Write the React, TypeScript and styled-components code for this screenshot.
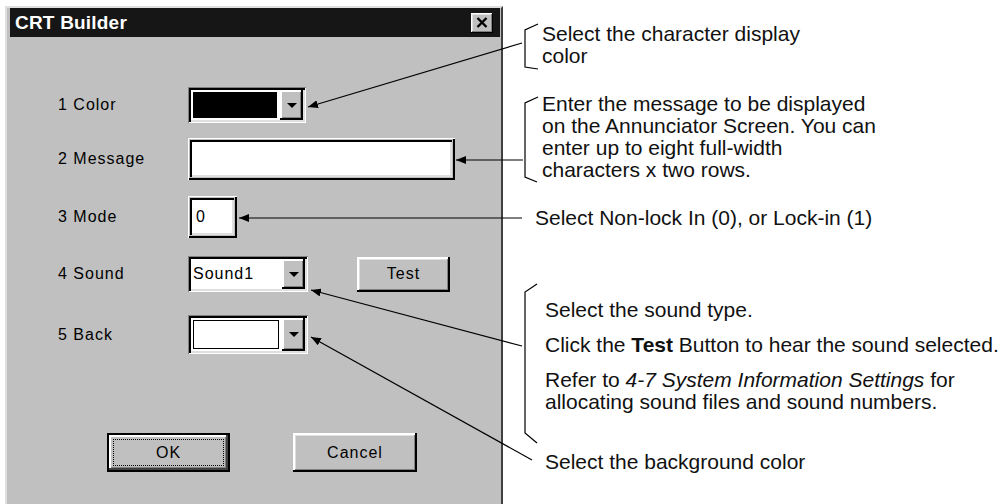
import React from 'react';
import styled, { createGlobalStyle } from 'styled-components';

const GlobalStyle = createGlobalStyle`
  html, body {
    margin: 0;
    padding: 0;
    background: #fff;
  }
  body {
    width: 1006px;
    height: 504px;
    overflow: hidden;
    font-family: "Liberation Sans", Arial, sans-serif;
  }
`;

const Page = styled.div`
  position: relative;
  display: flex;
  width: 1006px;
  height: 504px;
  overflow: hidden;
  background: #fff;
`;

// Dialog window
const Dialog = styled.div`
  flex: none;
  margin: 6px 0 0 5px;
  width: 498px;
  height: 510px;
  box-sizing: border-box;
  background: #c0c0c0;
  border-top: 2px solid #dfdfdf;
  border-left: 2px solid #dfdfdf;
  border-right: 2px solid #404040;
  padding: 0 1px 0 3px;
`;

const TitleBar = styled.div`
  height: 29px;
  display: flex;
  align-items: center;
  justify-content: space-between;
  background: #161616;
  padding: 0 7px 0 5px;
`;

const TitleText = styled.span`
  color: #fff;
  font-size: 19px;
  font-weight: bold;
  letter-spacing: 0.2px;
`;

const CloseButton = styled.div`
  width: 22px;
  height: 20px;
  box-sizing: border-box;
  background: #c0c0c0;
  display: flex;
  align-items: center;
  justify-content: center;
  box-shadow: inset -1px -1px #000, inset 1px 1px #fff, inset -2px -2px #808080, inset 2px 2px #dfdfdf;
`;

const FormBody = styled.div`
  padding-left: 48px;
  font-size: 16px;
  letter-spacing: 1px;
  color: #000;
`;

const Row = styled.div<{ $top: number; $h: number }>`
  display: flex;
  align-items: center;
  margin-top: ${(p) => p.$top}px;
  height: ${(p) => p.$h}px;
`;

const Label = styled.div`
  width: 130px;
  flex: none;
`;

const Combo = styled.div<{ $w: number }>`
  width: ${(p) => p.$w}px;
  height: 100%;
  box-sizing: border-box;
  display: flex;
  background: #fff;
  padding: 3px;
  box-shadow: inset 1px 1px #808080, inset -1px -1px #fff, inset 3px 3px #000, inset -3px -3px #dfdfdf;
`;

const Swatch = styled.div<{ $color: string }>`
  flex: 1;
  margin: 2px 3px 2px 2px;
  border: 1px solid #000;
  background: ${(p) => p.$color};
`;

const ComboText = styled.div`
  flex: 1;
  display: flex;
  align-items: center;
  padding-left: 2px;
`;

const DropButton = styled.div`
  width: 23px;
  flex: none;
  background: #c0c0c0;
  display: flex;
  align-items: center;
  justify-content: center;
  box-shadow: inset -2px -2px #000, inset 2px 2px #fff, inset -3px -3px #808080;
  &::after {
    content: '';
    border-left: 5px solid transparent;
    border-right: 5px solid transparent;
    border-top: 5px solid #000;
  }
`;

const TextField = styled.div<{ $w: number }>`
  width: ${(p) => p.$w}px;
  height: 100%;
  box-sizing: border-box;
  background: #fff;
  display: flex;
  align-items: center;
  padding-left: 8px;
  box-shadow: inset 1px 1px #fff, inset -2px -2px #000, inset 2px 2px #c0c0c0, inset -3px -3px #c0c0c0,
    inset 4px 4px #000, inset -5px -5px #dfdfdf;
`;

const Button = styled.div<{ $w: number; $h: number; $gap?: number }>`
  width: ${(p) => p.$w}px;
  height: ${(p) => p.$h}px;
  margin-left: ${(p) => p.$gap ?? 0}px;
  box-sizing: border-box;
  background: #c0c0c0;
  display: flex;
  align-items: center;
  justify-content: center;
  box-shadow: inset -2px -2px #000, inset 2px 2px #fff, inset -3px -3px #808080, inset 3px 3px #dfdfdf;
`;

const DefaultButton = styled(Button)`
  padding: 6px;
  box-shadow: inset 0 0 0 2px #000, inset -4px -4px #404040, inset 4px 4px #fff, inset -5px -5px #808080;
`;

const FocusRing = styled.div`
  flex: 1;
  align-self: stretch;
  display: flex;
  align-items: center;
  justify-content: center;
  border: 1px dotted #000;
`;

const Footer = styled.div`
  display: flex;
  padding-left: 49px;
  margin-top: 79px;
`;

// Annotation column
const Notes = styled.div`
  flex: 1;
  padding: 23px 0 0 32px;
  font-family: "Liberation Sans", Arial, Helvetica, sans-serif;
  font-size: 21px;
  line-height: 22px;
  color: #111;
  white-space: nowrap;
`;

const Note = styled.div<{ $top: number; $indent: number }>`
  margin-top: ${(p) => p.$top}px;
  margin-left: ${(p) => p.$indent}px;
`;

const Para = styled.p<{ $gap?: number }>`
  margin: ${(p) => p.$gap ?? 0}px 0 0 0;
`;

const Overlay = styled.svg`
  position: absolute;
  left: 0;
  top: 0;
  pointer-events: none;
`;

const callouts = [
  { x1: 522, y1: 43, x2: 308, y2: 107 },
  { x1: 523, y1: 160, x2: 456, y2: 160 },
  { x1: 522, y1: 218, x2: 239, y2: 218 },
  { x1: 522, y1: 346, x2: 311, y2: 290 },
  { x1: 532, y1: 460, x2: 311, y2: 337 },
];

const brackets = [
  'M538 24 L525 30 L525 67 L538 69',
  'M538 97 L525 103 L525 177 L537 182',
  'M537 284 L525 292 L525 433 L537 443',
];

const Leaders: React.FC = () => (
  <Overlay width={1006} height={504} viewBox="0 0 1006 504">
    <defs>
      <marker id="tip" viewBox="0 0 10 8" refX="10" refY="4" markerWidth="10" markerHeight="8" markerUnits="userSpaceOnUse" orient="auto">
        <path d="M0 0 L10 4 L0 8 z" fill="#000" />
      </marker>
    </defs>
    {callouts.map((c, i) => (
      <line key={i} x1={c.x1} y1={c.y1} x2={c.x2} y2={c.y2} stroke="#000" strokeWidth={1.2} markerEnd="url(#tip)" />
    ))}
    {brackets.map((d, i) => (
      <path key={i} d={d} fill="none" stroke="#000" strokeWidth={1.2} />
    ))}
  </Overlay>
);

const App: React.FC = () => {
  return (
    <Page>
      <GlobalStyle />
      <Dialog>
        <TitleBar>
          <TitleText>CRT Builder</TitleText>
          <CloseButton>
            <svg width="12" height="11" viewBox="0 0 12 11">
              <path d="M1.5 1 L10.5 10 M10.5 1 L1.5 10" stroke="#000" strokeWidth="2.4" />
            </svg>
          </CloseButton>
        </TitleBar>
        <FormBody>
          <Row $top={50} $h={36}>
            <Label>1 Color</Label>
            <Combo $w={118}>
              <Swatch $color="#000" />
              <DropButton />
            </Combo>
          </Row>
          <Row $top={15} $h={42}>
            <Label>2 Message</Label>
            <TextField $w={267} />
          </Row>
          <Row $top={16} $h={42}>
            <Label>3 Mode</Label>
            <TextField $w={49}>0</TextField>
          </Row>
          <Row $top={18} $h={36}>
            <Label>4 Sound</Label>
            <Combo $w={120}>
              <ComboText>Sound1</ComboText>
              <DropButton />
            </Combo>
            <Button $w={93} $h={35} $gap={49}>Test</Button>
          </Row>
          <Row $top={23} $h={39}>
            <Label>5 Back</Label>
            <Combo $w={120}>
              <Swatch $color="#fff" />
              <DropButton />
            </Combo>
          </Row>
          <Footer>
            <DefaultButton $w={123} $h={39}>
              <FocusRing>OK</FocusRing>
            </DefaultButton>
            <Button $w={124} $h={39} $gap={63}>Cancel</Button>
          </Footer>
        </FormBody>
      </Dialog>
      <Notes>
        <Note $top={0} $indent={7}>
          Select the character display
          <br />
          color
        </Note>
        <Note $top={26} $indent={7}>
          Enter the message to be displayed
          <br />
          on the Annunciator Screen. You can
          <br />
          enter up to eight full-width
          <br />
          characters x two rows.
        </Note>
        <Note $top={26} $indent={0}>
          Select Non-lock In (0), or Lock-in (1)
        </Note>
        <Note $top={70} $indent={10}>
          <Para>Select the sound type.</Para>
          <Para $gap={13}>
            Click the <b>Test</b> Button to hear the sound selected.
          </Para>
          <Para $gap={13}>
            Refer to <i>4-7 System Information Settings</i> for
            <br />
            allocating sound files and sound numbers.
          </Para>
        </Note>
        <Note $top={38} $indent={10}>
          Select the background color
        </Note>
      </Notes>
      <Leaders />
    </Page>
  );
};

export default App;
